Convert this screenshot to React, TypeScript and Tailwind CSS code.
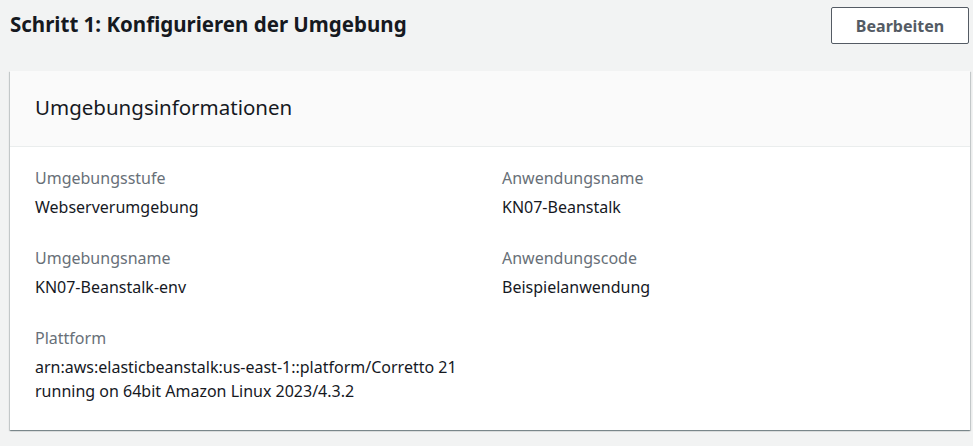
const fields = [
  { label: "Umgebungsstufe", value: ["Webserverumgebung"] },
  { label: "Anwendungsname", value: ["KN07-Beanstalk"] },
  { label: "Umgebungsname", value: ["KN07-Beanstalk-env"] },
  { label: "Anwendungscode", value: ["Beispielanwendung"] },
  {
    label: "Plattform",
    value: ["arn:aws:elasticbeanstalk:us-east-1::platform/Corretto 21", "running on 64bit Amazon Linux 2023/4.3.2"],
  },
];

export default function App() {
  return (
    <div className="w-[973px] h-[446px] bg-[#f2f3f3] font-['Noto_Sans',sans-serif] overflow-hidden">
      {/* Step header */}
      <div className="flex items-center justify-between pl-[10px] pr-[4px] pt-[7px] h-[44px]">
        <h2 className="text-[20.5px] font-bold text-[#16191f] leading-none -mt-[3px]">Schritt 1: Konfigurieren der Umgebung</h2>
        <button className="w-[138px] h-[37px] border border-[#545b64] rounded-[2px] bg-white text-[#545b64] text-[16px] font-bold">
          Bearbeiten
        </button>
      </div>

      {/* Card */}
      <div className="ml-[10px] mr-[3px] mt-[27px] bg-white shadow-[0_1px_1px_0_rgba(0,28,36,0.3),1px_1px_1px_0_rgba(0,28,36,0.15),-1px_1px_1px_0_rgba(0,28,36,0.15)]">
        <div className="h-[76px] bg-[#fafafa] border-b border-[#eaeded] flex items-center px-[25px]">
          <h3 className="text-[20.5px] text-[#16191f] -mt-[2px]">Umgebungsinformationen</h3>
        </div>
        <div className="grid grid-cols-2 gap-x-[24px] gap-y-[27px] px-[25px] pt-[19px] pb-[27px]">
          {fields.map((f) => (
            <div key={f.label} className="flex flex-col">
              <span className="text-[16px] leading-[24px] text-[#687078]">{f.label}</span>
              <div className="mt-[5px]">
                {f.value.map((line) => (
                  <div key={line} className="text-[16px] leading-[24px] text-[#16191f]">
                    {line}
                  </div>
                ))}
              </div>
            </div>
          ))}
        </div>
      </div>
    </div>
  );
}
